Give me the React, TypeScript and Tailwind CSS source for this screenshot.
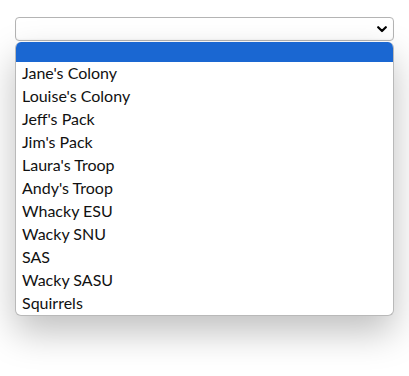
const OPTIONS = [
  "Jane's Colony",
  "Louise's Colony",
  "Jeff's Pack",
  "Jim's Pack",
  "Laura's Troop",
  "Andy's Troop",
  "Whacky ESU",
  "Wacky SNU",
  "SAS",
  "Wacky SASU",
  "Squirrels",
];

export default function App() {
  return (
    <main className="min-h-screen bg-white px-[15px] pt-[17px] font-['Lato','Noto_Sans',sans-serif] text-[16px] text-[#212529]">
      <div className="w-[379px]">
        <div className="flex h-[24px] items-center justify-end rounded-[4px] border border-[#b4b4b4] bg-white pr-[6px] shadow-[inset_0_-1px_2px_rgba(0,0,0,0.04)]">
          <svg width="10" height="7" viewBox="0 0 10 7" className="text-black">
            <path d="M1.2 1.2 5 5 8.8 1.2" fill="none" stroke="currentColor" strokeWidth="2.2" strokeLinecap="round" strokeLinejoin="round" />
          </svg>
        </div>
        <div className="mt-px overflow-hidden rounded-[6px] border border-[#b9b9b9] border-t-0 bg-white shadow-[0_16px_36px_rgba(0,0,0,0.25)]">
          <div className="h-[20px] bg-[#1a67d2]" />
          {OPTIONS.map((name) => (
            <div key={name} className="flex h-[23px] items-center px-[6px] pb-[2px] leading-none text-[#111]">
              {name}
            </div>
          ))}
        </div>
      </div>
    </main>
  );
}
